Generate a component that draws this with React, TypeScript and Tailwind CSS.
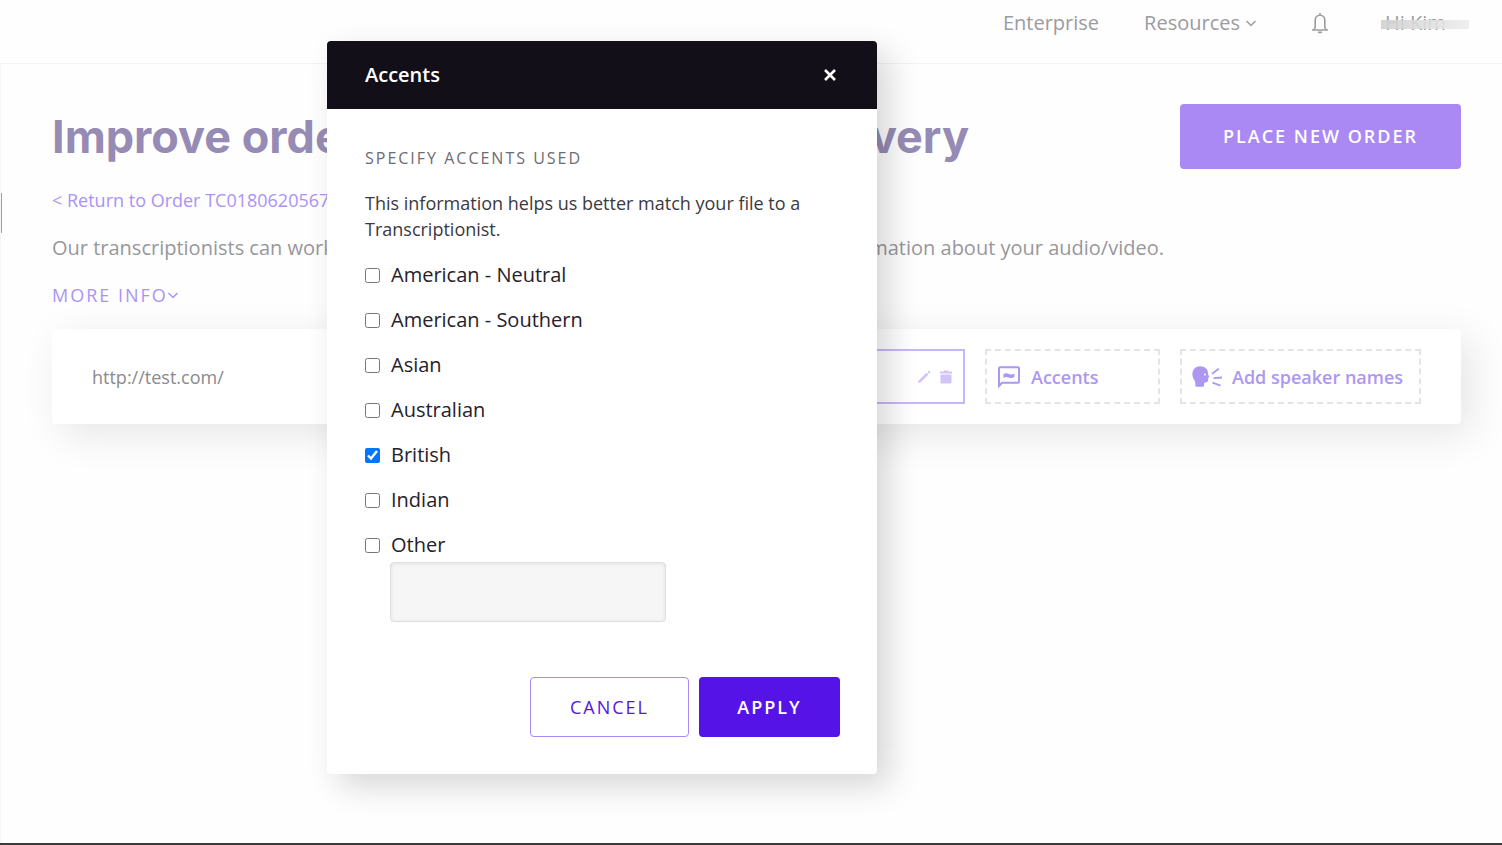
import { useState } from "react";

const ACCENTS = [
  "American - Neutral",
  "American - Southern",
  "Asian",
  "Australian",
  "British",
  "Indian",
  "Other",
];

function Chevron() {
  return (
    <svg width="10" height="8" viewBox="0 0 10 8" fill="none" stroke="currentColor" strokeWidth="1.4" aria-hidden>
      <path d="M.5 2L5 6.600 9.500 2" />
    </svg>
  );
}

function BellIcon() {
  return (
    <svg width="18" height="22" viewBox="0 0 18 22" fill="none" stroke="currentColor" strokeWidth="1.6" aria-hidden>
      <path d="M9 1v2M1 18h16M3.400 18v-1.200L4.200 15V8.200C4.200 5.400 6.300 3.200 9 3.200s4.800 2.200 4.800 5V15l.8 1.800V18" />
      <path d="M7.200 19.600c.4 1 3.200 1 3.600 0" />
    </svg>
  );
}

function AccentIcon() {
  return (
    <svg width="24" height="24" viewBox="0 0 24 24" fill="none" stroke="currentColor" strokeWidth="2" aria-hidden>
      <path d="M2 21V3.200c0-.6.4-1 1-1h18c.6 0 1 .4 1 1v13.600c0 .6-.4 1-1 1H5L2 21z" />
      <path
        stroke="none"
        fill="currentColor"
        d="M6.400 9.200C8 7.800 10 7.900 12 8.900c1.800.8 3.400.8 5.400-.5V12c-1.900 1.400-3.800 1.300-5.600.5-2-.9-3.500-.9-5.400.5z"
      />
    </svg>
  );
}

function SpeakerIcon() {
  return (
    <svg width="30" height="24" viewBox="0 0 30 24" aria-hidden>
      <path
        fill="currentColor"
        d="M8.200 1.200C12.600 1.200 16 4 16 7.900c0 1.200.3 1.800.9 3 .5 1 .3 1.400-.4 1.700-.3.2-.3.600-.3 1.200 0 2.800-.6 3.700-2.800 3.700-1 0-1.400.5-1.400 1.500v1.400c0 .9-.5 1.400-1.400 1.400H4.700c-.9 0-1.300-.5-1.300-1.300 0-2.700-.2-4.200-1.200-5.600C1 13.200.4 11.300.4 9c0-4.600 3.300-7.800 7.800-7.800z"
      />
      <circle cx="13" cy="9.500" r="1" fill="#fff" />
      <path d="M20 8.800l6.800-5M21.500 13.100l8.500-.6M20.500 17.600l8 3" stroke="currentColor" strokeWidth="1.800" />
    </svg>
  );
}

function Header() {
  return (
    <header className="flex h-16 items-start justify-end border-b border-[#f4f4f4] pr-[33px] text-xl text-[#9c9b9f]">
      <nav className="flex h-[46px] items-center">
        <a href="#enterprise" className="mr-[45px]">
          Enterprise
        </a>
        <a href="#resources" className="mr-[55px] flex items-center gap-1.5">
          Resources
          <Chevron />
        </a>
        <button type="button" aria-label="Notifications" className="mr-[52px]">
          <BellIcon />
        </button>
        <a href="#account" className="relative w-[88px] pl-1">
          Hi Kim
          <span className="absolute inset-x-0 top-[11px] h-[9px] bg-linear-to-r from-[#d0d0d1] via-[#dededf] to-[#ededed] opacity-90" />
        </a>
      </nav>
    </header>
  );
}

function OrderRow() {
  return (
    <div className="mt-5 flex items-center gap-5 rounded bg-white px-10 py-5 shadow-[10px_10px_40px_rgba(0,0,0,0.1)]">
      <span className="flex-1 text-lg text-[#8b8a8e]">http://test.com/</span>
      <div className="flex h-[55px] w-[175px] items-center justify-end gap-2 border-2 border-[#c8b6fa] px-2.5 text-[#d2c4fb]">
        <button type="button" aria-label="Edit accent">
          <svg width="14" height="14" viewBox="0 0 14 14" fill="currentColor" aria-hidden>
            <path d="M1 13l.5-2.600L9.600 2.700l1.900 1.900L3.500 12.400zM10.400 2l1.200-1c.4-.3.8-.2 1.200.1l.4.5c.3.4.3.8 0 1.100l-1 1.100z" />
          </svg>
        </button>
        <button type="button" aria-label="Remove accent">
          <svg width="14" height="14" viewBox="0 0 14 14" fill="currentColor" aria-hidden>
            <path d="M1 1.500h3.500L5 .5h4l.5 1H13v2H1zM1.500 4.500h11V12c0 1-.5 1.500-1.500 1.500H3c-1 0-1.500-.5-1.500-1.500z" />
          </svg>
        </button>
      </div>
      <button
        type="button"
        className="flex h-[55px] w-[175px] items-center gap-2.5 border-2 border-dashed border-[#e4e4e4] px-2.5 text-lg font-semibold text-[#ad97f3]"
      >
        <AccentIcon />
        Accents
      </button>
      <button
        type="button"
        className="flex h-[55px] w-[241px] items-center gap-2.5 border-2 border-dashed border-[#e4e4e4] px-2.5 text-lg font-semibold text-[#ad97f3]"
      >
        <SpeakerIcon />
        Add speaker names
      </button>
    </div>
  );
}

function AccentsDialog() {
  const [selected, setSelected] = useState<string[]>(["British"]);
  const [other, setOther] = useState("");

  const toggle = (accent: string) =>
    setSelected((prev) => (prev.includes(accent) ? prev.filter((a) => a !== accent) : [...prev, accent]));

  return (
    <div
      role="dialog"
      aria-labelledby="accents-title"
      className="absolute top-[41px] left-[327px] w-[550px] overflow-hidden rounded bg-white shadow-[12px_12px_32px_rgba(0,0,0,0.16)]"
    >
      <div className="flex h-[68px] items-center justify-between bg-[#120f18] pr-[37px] pl-[38px] text-white">
        <h2 id="accents-title" className="text-xl font-semibold">
          Accents
        </h2>
        <button type="button" aria-label="Close" className="p-1">
          <svg width="12" height="12" viewBox="0 0 12 12" stroke="currentColor" strokeWidth="2.600" aria-hidden>
            <path d="M1 1l10 10M11 1L1 11" />
          </svg>
        </button>
      </div>
      <form className="p-[37px] pl-[38px]" onSubmit={(e) => e.preventDefault()}>
        <h3 className="text-base tracking-[2px] text-[#6d6b73]">SPECIFY ACCENTS USED</h3>
        <p className="mt-5 text-lg leading-[26px] text-[#3b3941]">
          This information helps us better match your file to a Transcriptionist.
        </p>
        <ul className="mt-[17px] space-y-[13px]">
          {ACCENTS.map((accent) => (
            <li key={accent}>
              <label className="flex h-8 items-center gap-[11px] text-xl text-[#25222b]">
                <input
                  type="checkbox"
                  className="size-[15px]"
                  checked={selected.includes(accent)}
                  onChange={() => toggle(accent)}
                />
                {accent}
              </label>
            </li>
          ))}
        </ul>
        <input
          type="text"
          aria-label="Other accent"
          value={other}
          onChange={(e) => setOther(e.target.value)}
          className="mt-px ml-[25px] block h-[60px] w-[276px] rounded border border-[#dedede] bg-[#f6f6f6] px-3 text-lg shadow-[inset_0_1px_4px_rgba(0,0,0,0.08)]"
        />
        <div className="mt-[55px] flex justify-end gap-2.5 text-lg">
          <button
            type="button"
            className="h-[60px] w-[159px] rounded border border-[#a88af5] tracking-[2px] text-[#5513e8]"
          >
            CANCEL
          </button>
          <button
            type="submit"
            className="h-[60px] w-[141px] rounded bg-[#5513e8] font-semibold tracking-[2px] text-white"
          >
            APPLY
          </button>
        </div>
      </form>
    </div>
  );
}

export default function App() {
  return (
    <div className="relative flex min-h-screen flex-col border-b-2 border-[#3a3a3a] bg-[#fefefe] font-['Open_Sans',sans-serif]">
      <Header />
      <main className="relative flex-1 border-l border-[#f6f6f6] pt-10 pr-[41px] pl-[51px]">
        <span className="absolute top-[129px] left-0 h-10 w-px bg-[#a58df0]" />
        <div className="flex h-16 items-center justify-between">
          <h1 className="flex w-[917px] justify-between font-['Inter',sans-serif] text-[45px] leading-none font-bold text-[#968bb4]">
            <span>Improve order</span>
            <span>&amp; delivery</span>
          </h1>
          <button
            type="button"
            className="h-[65px] w-[281px] rounded bg-[#aa89f4] text-lg font-semibold tracking-[2px] text-white"
          >
            PLACE NEW ORDER
          </button>
        </div>
        <a href="#order" className="mt-[18px] block text-lg leading-7 text-[#ab93f5]">
          &lt; Return to Order TC0180620567
        </a>
        <p className="mt-5 flex w-[1112px] justify-between text-xl text-[#98979b]">
          <span>Our transcriptionists can work faster</span>
          <span>with more information about your audio/video.</span>
        </p>
        <button type="button" className="mt-[19px] flex items-center text-lg tracking-[2px] text-[#ab93f5]">
          MORE INFO
          <Chevron />
        </button>
        <OrderRow />
      </main>
      <AccentsDialog />
    </div>
  );
}
